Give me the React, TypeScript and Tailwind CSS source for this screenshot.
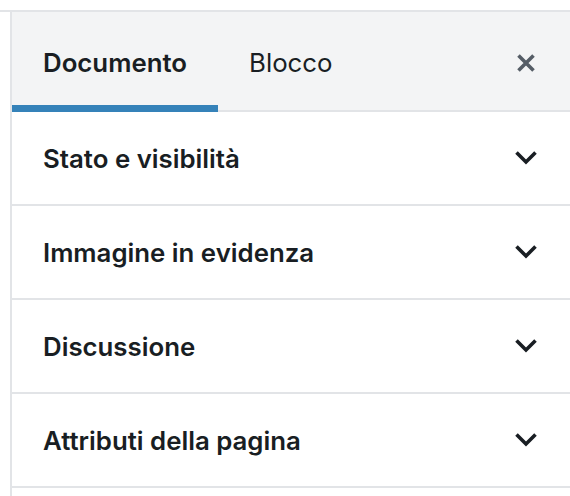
import React from "react";

const Chevron = () => (
  <svg width="24" height="16" viewBox="0 0 24 16" fill="none" className="shrink-0">
    <path d="M2.5 2.5 L12 12 L21.5 2.5" stroke="#191e23" strokeWidth="3.6" />
  </svg>
);

const Close = () => (
  <svg width="20" height="20" viewBox="0 0 20 20" fill="none">
    <path d="M2.5 2.5 L17.5 17.5 M17.5 2.5 L2.5 17.5" stroke="#555d66" strokeWidth="3.6" />
  </svg>
);

const rows = ["Stato e visibilità", "Immagine in evidenza", "Discussione", "Attributi della pagina", ""];

export default function App() {
  return (
    <div className="w-[570px] h-[496px] overflow-hidden bg-white pt-[10px]" style={{ fontFamily: "Inter, 'Noto Sans', sans-serif" }}>
      <div className="border-t-2 border-[#e2e4e7]">
        <div className="ml-[10px] border-l-2 border-[#e2e4e7] h-[600px]">
          <div className="flex items-stretch h-[100px] bg-[#f3f4f5] border-b-2 border-[#e2e4e7]">
            <div className="relative flex items-center pt-[4px] px-[31px] text-[25.8px] font-semibold text-[#191e23]">
              Documento
              <div className="absolute left-0 right-0 bottom-[-2px] h-[7px] bg-[#3582b9]" />
            </div>
            <div className="flex items-center pt-[4px] px-[31px] text-[25.8px] font-normal text-[#191e23]">Blocco</div>
            <div className="flex-1" />
            <div className="flex items-center pt-[3px] pr-[34px]">
              <Close />
            </div>
          </div>
          {rows.map((r, i) => (
            <div key={i} className="flex items-center justify-between h-[94px] pl-[31px] pr-[32px] border-b-2 border-[#e2e4e7]">
              <span className="pt-[2px] text-[25.8px] font-semibold text-[#191e23]">{r}</span>
              {r && <Chevron />}
            </div>
          ))}
        </div>
      </div>
    </div>
  );
}
